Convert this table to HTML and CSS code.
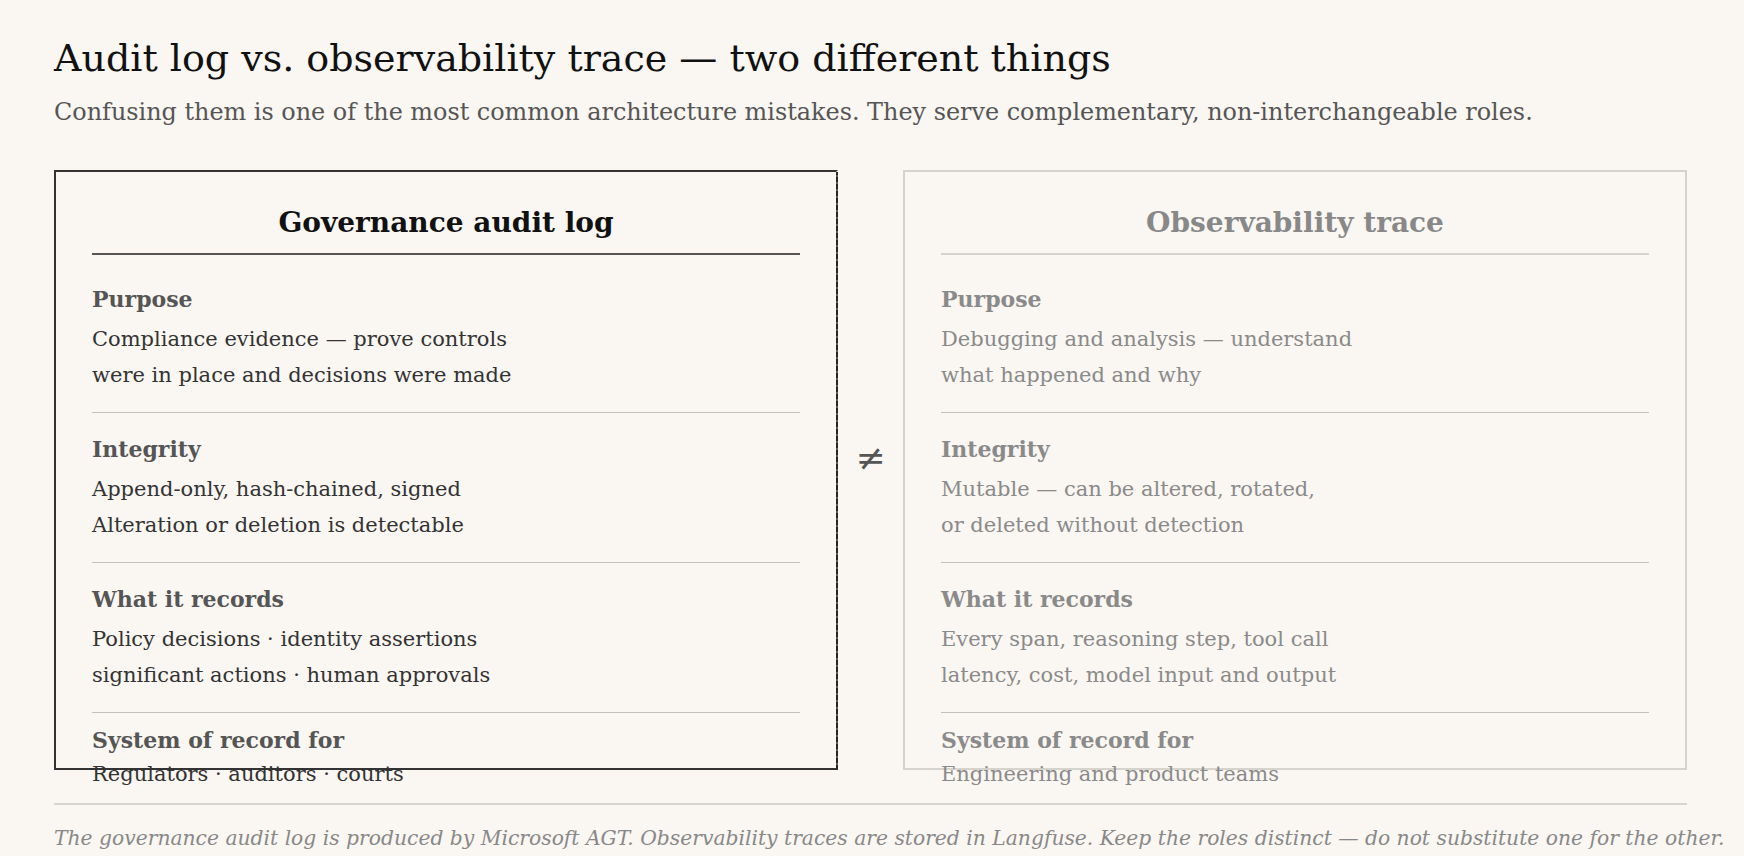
FILE: index.html
```html
<!DOCTYPE html>
<html lang="en">
<head>
<meta charset="utf-8">
<title>Audit log vs. observability trace</title>
<link rel="stylesheet" href="styles.css">
</head>
<body>
<main class="page">
  <h1 class="title">Audit log vs. observability trace — two different things</h1>
  <p class="subtitle">Confusing them is one of the most common architecture mistakes. They serve complementary, non-interchangeable roles.</p>

  <div class="compare">
    <section class="card card--primary">
      <h2 class="card-title">Governance audit log</h2>
      <div class="row">
        <div class="row-label">Purpose</div>
        <div class="row-body">Compliance evidence — prove controls<br>were in place and decisions were made</div>
      </div>
      <div class="row">
        <div class="row-label">Integrity</div>
        <div class="row-body">Append-only, hash-chained, signed<br>Alteration or deletion is detectable</div>
      </div>
      <div class="row">
        <div class="row-label">What it records</div>
        <div class="row-body">Policy decisions · identity assertions<br>significant actions · human approvals</div>
      </div>
      <div class="row row--last">
        <div class="row-label">System of record for</div>
        <div class="row-body">Regulators · auditors · courts</div>
      </div>
    </section>

    <div class="neq">≠</div>

    <section class="card card--muted">
      <h2 class="card-title">Observability trace</h2>
      <div class="row">
        <div class="row-label">Purpose</div>
        <div class="row-body">Debugging and analysis — understand<br>what happened and why</div>
      </div>
      <div class="row">
        <div class="row-label">Integrity</div>
        <div class="row-body">Mutable — can be altered, rotated,<br>or deleted without detection</div>
      </div>
      <div class="row">
        <div class="row-label">What it records</div>
        <div class="row-body">Every span, reasoning step, tool call<br>latency, cost, model input and output</div>
      </div>
      <div class="row row--last">
        <div class="row-label">System of record for</div>
        <div class="row-body">Engineering and product teams</div>
      </div>
    </section>
  </div>

  <footer class="note">The governance audit log is produced by Microsoft AGT. Observability traces are stored in Langfuse. Keep the roles distinct — do not substitute one for the other.</footer>
</main>
</body>
</html>
```
FILE: styles.css
```css
html, body {
  margin: 0;
  padding: 0;
  background: #faf6f1;
}

body {
  font-family: "DejaVu Serif", "Liberation Serif", serif;
  color: #333;
}

.page {
  width: 1633px;
  padding: 36px 0 0 54px;
}

.title {
  margin: 0;
  font-size: 38px;
  line-height: 44px;
  font-weight: normal;
  color: #111;
}

.subtitle {
  margin: 16px 0 0;
  font-size: 23.9px;
  line-height: 32px;
  color: #555;
}

.compare {
  margin-top: 42px;
  display: grid;
  grid-template-columns: 1fr 65px 1fr;
}

.card {
  box-sizing: border-box;
  height: 600px;
  padding: 0 36px;
  border: 2px solid #d6d2cc;
}

.card--primary {
  border-color: #333 transparent #333 #333;
  background: repeating-linear-gradient(to bottom, #262626 0 5px, #5e5e5e 5px 7px) right top / 2px 100% no-repeat border-box;
}

.card-title {
  margin: 0 0 8px;
  padding: 34px 0 13px;
  text-align: center;
  font-size: 28px;
  line-height: 34px;
  font-weight: bold;
  border-bottom: 2px solid #555;
  color: #111;
}

.card--muted .card-title {
  color: #888;
  border-bottom-color: #d6d2cc;
}

.row {
  padding: 22px 0 19px;
  border-bottom: 1px solid #c4c1bc;
}

.row--last {
  border-bottom: none;
  padding-top: 13px;
}

.row-label {
  font-size: 22px;
  line-height: 28px;
  font-weight: bold;
  color: #555;
  margin-bottom: 8px;
}

.row--last .row-label {
  margin-bottom: 2px;
}

.row-body {
  font-size: 21px;
  line-height: 36px;
  color: #333;
}

.card--muted .row-label,
.card--muted .row-body {
  color: #8a8a8a;
}

.neq {
  display: flex;
  align-items: center;
  justify-content: center;
  padding-bottom: 26px;
  font-size: 36px;
  color: #555;
}

.note {
  margin-top: 33px;
  padding-top: 19px;
  border-top: 2px solid #d8d4cf;
  font-size: 20.3px;
  line-height: 28px;
  font-style: italic;
  color: #888;
  white-space: nowrap;
}
```
